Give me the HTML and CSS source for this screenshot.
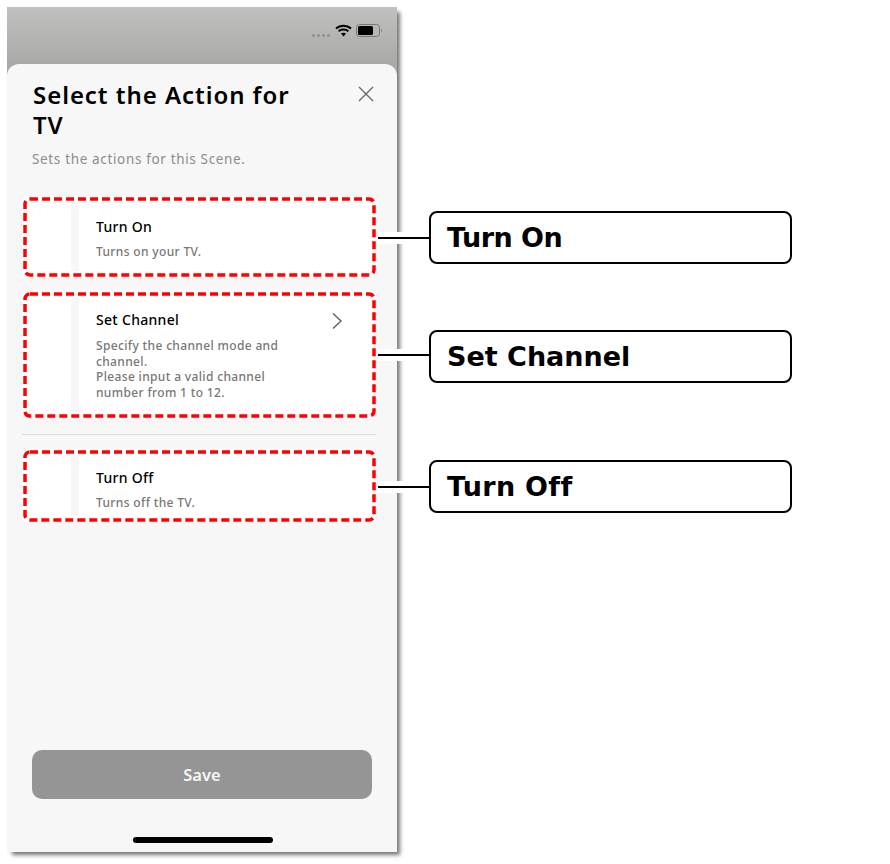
FILE: index.html

```html
<!doctype html>
<html>
<head>
<meta charset="utf-8">
<title>Select the Action for TV</title>
<link rel="stylesheet" href="styles.css">
</head>

<body>
	<div class="page">
		<div class="phone">
			<div class="status">
				<span class="dots"><i></i><i></i><i></i><i></i></span>
				<svg class="wifi" width="17" height="13" viewBox="0 0 17 13">
					<path d="M1 4.600C5.200 .8 11.800 .8 16 4.600" fill="none" stroke="#000" stroke-width="2"/>
					<path d="M3.600 7.200C6.300 4.900 10.700 4.900 13.400 7.200" fill="none" stroke="#000" stroke-width="2"/>
					<path d="M6 9.500C7.400 8.500 9.600 8.500 11 9.500L8.500 12.500Z" fill="#000"/>
				</svg>
				<svg class="battery" width="27" height="13" viewBox="0 0 27 13">
					<rect x="0.500" y="0.500" width="23" height="12" rx="3" fill="none" stroke="#777"/>
					<rect x="2" y="2" width="15" height="9" rx="1.500" fill="#000"/>
					<path d="M25 4.500C26 5 26 8 25 8.500Z" fill="#777"/>
				</svg>
			</div>
			<div class="sheet">
				<div class="sheet-head">
					<h1>Select the Action for TV</h1>
					<svg class="close" width="16" height="16" viewBox="0 0 16 16">
						<path d="M1 1L15 15M15 1L1 15" stroke="#666" stroke-width="1.300" fill="none"/>
					</svg>
				</div>
				<p class="intro">Sets the actions for this Scene.</p>

				<div class="card card-on">
					<div class="card-stripe"></div>
					<div class="card-body">
						<h2>Turn On</h2>
						<p>Turns on your TV.</p>
					</div>
					<svg class="dash"><rect x="0" y="0" rx="5" ry="5"/></svg>
				</div>
				<div class="card card-channel">
					<div class="card-stripe"></div>
					<div class="card-body">
						<h2>Set Channel</h2>
						<p>Specify the channel mode and channel.<br>Please input a valid channel number from 1 to 12.</p>
					</div>
					<svg class="chevron" width="12" height="18" viewBox="0 0 12 18">
						<path d="M2 1.500L10 9L2 16.500" stroke="#666" stroke-width="1.500" fill="none"/>
					</svg>
					<svg class="dash"><rect x="0" y="0" rx="5" ry="5"/></svg>
				</div>
				<div class="divider"></div>
				<div class="card card-off">
					<div class="card-stripe"></div>
					<div class="card-body">
						<h2>Turn Off</h2>
						<p>Turns off the TV.</p>
					</div>
					<svg class="dash"><rect x="0" y="0" rx="5" ry="5"/></svg>
				</div>

				<button class="save">Save</button>
				<div class="home-bar"></div>
			</div>
		</div>

		<div class="callout callout-on"><span class="leader"></span>Turn On</div>
		<div class="callout callout-channel"><span class="leader"></span>Set Channel</div>
		<div class="callout callout-off"><span class="leader"></span>Turn Off</div>
	</div>
</body>
</html>
```

FILE: styles.css

```css
*{margin:0; padding:0; box-sizing:border-box;}
html,body{background:#fff;}
body{font-family:"Noto Sans","Noto Sans CJK JP",sans-serif;}
.page{position:relative; width:890px; height:864px; padding:7px;}

.phone{width:390px; height:845px; display:flex; flex-direction:column; background:linear-gradient(#c1c0be,#a9aaa8 57px); box-shadow:4px 4px 4px -1px #777;}
.status{height:57px; display:flex; align-items:flex-start; justify-content:flex-end; padding:17px 14px 0 0;}
.dots{display:flex; gap:2px; margin:10px 5px 0 0;}
.dots i{width:3px; height:3px; border-radius:50%; background:#8f8f8f;}
.wifi{margin-right:4px;}

.sheet{flex:1; display:flex; flex-direction:column; background:#f7f7f7; border-radius:12px 12px 0 0;}
.sheet-head{display:flex; justify-content:space-between; align-items:flex-start; padding:16px 23px 0 26px;}
h1{width:275px; font-size:24px; line-height:30px; font-weight:600; letter-spacing:0.950px; color:#000;}
.close{margin-top:6px;}
.intro{margin:9px 0 0 25px; font-size:13.500px; line-height:20px; letter-spacing:0.650px; color:#8c8c8c;}

.card{position:relative; display:flex; margin:0 21px 0 15px; background:#fff; border-radius:6px;}
.card-on{height:81px; margin-top:27px; margin-bottom:14px;}
.card-channel{height:127px;}
.card-off{height:73px;}
.card-stripe{width:8px; margin:6px 0 6px 49px; background:#f7f7f7;}
.card-body{padding:20px 0 0 17px; width:225px;}
h2{font-size:14px; line-height:18px; font-weight:500; letter-spacing:0.300px; color:#000;}
.card-body p{margin-top:8px; font-size:12px; line-height:15.500px; font-weight:500; letter-spacing:0.350px; color:#777;}
.card-on .card-body{padding-top:22px;}
.card-channel .card-body p{margin-top:9px;}
.chevron{position:absolute; top:21px; right:33px;}
.dash{position:absolute; left:2.500px; top:2.500px; width:calc(100% - 5px); height:calc(100% - 5px); overflow:visible;}
.dash rect{width:100%; height:100%; fill:none; stroke:#f00; stroke-width:3.500; stroke-dasharray:8 4;}

.divider{height:1px; margin:16px 21px 14px 15px; background:#dcdcdc;}

.save{width:340px; height:49px; margin:228px 0 0 25px; border:0; border-radius:10px; background:#959595; color:#f6f6f6; font-family:inherit; font-size:16.500px; font-weight:600;}
.home-bar{width:140px; height:6px; margin:38px 0 0 126px; border-radius:3px; background:#000;}

.callout{position:absolute; left:429px; width:363px; height:53px; padding-left:16px; border:2px solid #000; border-radius:8px; background:#fff; color:#000; font-family:"DejaVu Sans",sans-serif; font-size:27px; line-height:49px; font-weight:bold;}
.callout-on{top:211px; letter-spacing:-0.500px;}
.callout-channel{top:330px;}
.callout-off{top:460px; letter-spacing:0.300px;}
.leader{position:absolute; left:-53px; top:19px; width:51px; height:12px; background:linear-gradient(#fff 5px,#000 5px,#000 7px,#fff 7px);}
.callout-channel .leader{top:17px;}
```
